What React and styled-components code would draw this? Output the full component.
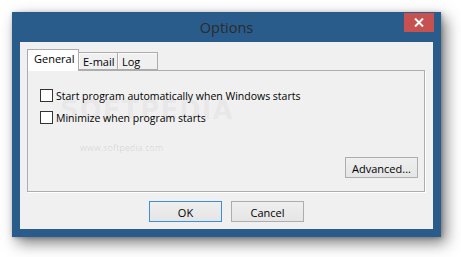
import React from 'react';
import styled, { createGlobalStyle } from 'styled-components';

const frameBlue = '#295b8b';
const uiFont = '"Open Sans", "Noto Sans", sans-serif';

const GlobalStyle = createGlobalStyle`
  html, body {
    margin: 0;
    background: #ffffff;
  }
  body {
    font-family: ${uiFont};
    font-size: 10.5px;
    color: #000;
  }
`

const Page = styled.div`
  width: 461px;
  height: 257px;
  padding: 12px 0 0 12px;
  box-sizing: border-box;
`

const Window = styled.div`
  width: 429px;
  height: 225px;
  box-sizing: border-box;
  background: ${frameBlue};
  padding: 0 8px 8px;
  display: flex;
  flex-direction: column;
  box-shadow: 5px 6px 14px rgba(0, 0, 0, 0.5), 1px 1px 4px rgba(0, 0, 0, 0.25);
`

const TitleBar = styled.div`
  height: 30px;
  display: grid;
  grid-template-columns: 1fr auto 1fr;
  align-items: center;
`

const Title = styled.div`
  grid-column: 2;
  font-size: 14.5px;
  color: #2b2b2b;
`

const CloseButton = styled.div`
  grid-column: 3;
  justify-self: end;
  align-self: start;
  margin-top: 1px;
  margin-right: -1px;
  width: 30px;
  height: 19px;
  background: #c75050;
  display: flex;
  align-items: center;
  justify-content: center;
`

const Client = styled.div`
  flex: 1;
  background: #f0f0f0;
  padding: 7px 7px 0;
  display: flex;
  flex-direction: column;
`

const TabStrip = styled.div`
  display: flex;
  align-items: flex-end;
  height: 21px;
  position: relative;
  z-index: 1;
`

const Tab = styled.div`
  box-sizing: border-box;
  height: ${p => (p.$active ? '22px' : '18px')};
  width: ${p => p.$width}px;
  margin-bottom: ${p => (p.$active ? '-1px' : '0')};
  margin-left: ${p => (p.$first ? '0' : '-1px')};
  border: 1px solid #acacac;
  border-bottom: ${p => (p.$active ? 'none' : '1px solid #acacac')};
  background: ${p => (p.$active ? '#ffffff' : '#f0f0f0')};
  box-shadow: ${p => (p.$active ? 'none' : 'inset 1px 1px 0 #fafafa')};
  padding: ${p => (p.$active ? '1px 0 0 6px' : '1px 0 0 4px')};
  font-size: 11px;
  line-height: 15px;
  z-index: ${p => (p.$active ? 2 : 1)};
`

const Panel = styled.div`
  height: 122px;
  box-sizing: border-box;
  border: 1px solid #adadad;
  box-shadow: 1px 1px 0 #ffffff;
  margin-right: 1px;
  padding: 18px 6px 13px 12px;
  display: flex;
  flex-direction: column;
  gap: 9px;
  position: relative;
`

const CheckRow = styled.label`
  display: flex;
  align-items: center;
  gap: 3px;
  height: 13px;
  font-size: 10.5px;
  white-space: nowrap;
  position: relative;
  z-index: 1;
`

const CheckBox = styled.span`
  width: 13px;
  height: 13px;
  box-sizing: border-box;
  border: 1px solid #333333;
  background: #ffffff;
  flex: none;
`

const Button = styled.div`
  width: 73px;
  height: 21px;
  box-sizing: border-box;
  border: 1px solid ${p => (p.$default ? '#3c8fdc' : '#adadad')};
  background: linear-gradient(#efefef, #e5e5e5);
  display: flex;
  align-items: center;
  justify-content: center;
  font-size: 11px;
  color: #000;
  padding-top: 1px;
`

const AdvancedButton = styled(Button)`
  margin-top: auto;
  align-self: flex-end;
`

const ButtonRow = styled.div`
  display: flex;
  justify-content: center;
  gap: 9px;
  margin-top: 9px;
`

const Watermark = styled.div`
  position: absolute;
  z-index: 0;
  left: ${p => p.$x}px;
  top: ${p => p.$y}px;
  font-family: ${p => p.$font};
  font-size: ${p => p.$size}px;
  font-weight: ${p => p.$weight};
  color: ${p => p.$color};
  letter-spacing: ${p => p.$spacing}px;
  pointer-events: none;
  white-space: nowrap;
`

const CloseIcon = () => (
  <svg width="10" height="9" viewBox="0 0 10 9">
    <path d="M1 0.5 L9 8.5 M9 0.5 L1 8.5" stroke="#ffffff" strokeWidth="2" />
  </svg>
)

const App = () => (
  <Page>
    <GlobalStyle />
    <Window>
      <TitleBar>
        <Title>Options</Title>
        <CloseButton>
          <CloseIcon />
        </CloseButton>
      </TitleBar>
      <Client>
        <TabStrip>
          <Tab $active $first $width={52}>General</Tab>
          <Tab $width={40}>E-mail</Tab>
          <Tab $width={41}>Log</Tab>
        </TabStrip>
        <Panel>
          <Watermark
            $x={32}
            $y={24}
            $size={26}
            $weight={700}
            $spacing={1}
            $font={'"DejaVu Sans", sans-serif'}
            $color="rgba(0, 0, 0, 0.05)"
          >
            SOFTPEDIA
          </Watermark>
          <Watermark
            $x={52}
            $y={70}
            $size={9}
            $weight={400}
            $spacing={0}
            $font={'"Open Sans", sans-serif'}
            $color="rgba(0, 0, 0, 0.12)"
          >
            www.softpedia.com
          </Watermark>
          <CheckRow>
            <CheckBox />
            Start program automatically when Windows starts
          </CheckRow>
          <CheckRow>
            <CheckBox />
            Minimize when program starts
          </CheckRow>
          <AdvancedButton>Advanced...</AdvancedButton>
        </Panel>
        <ButtonRow>
          <Button $default>OK</Button>
          <Button>Cancel</Button>
        </ButtonRow>
      </Client>
    </Window>
  </Page>
)

export default App;
